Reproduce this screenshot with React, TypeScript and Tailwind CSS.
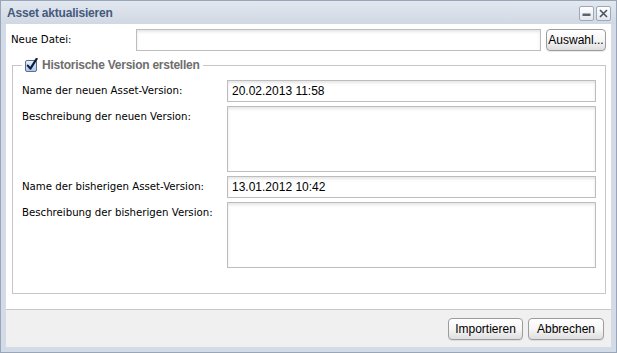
const labelFont = { fontFamily: '"DejaVu Sans", Verdana, sans-serif' };
const boldFont = { fontFamily: '"Liberation Sans", Arial, sans-serif' };

function ToolButton({ kind }: { kind: "min" | "close" }) {
  return (
    <div className="flex h-[15px] w-[15px] items-center justify-center rounded-[2px] border border-[#9ea8b8] bg-gradient-to-b from-white to-[#e3e7ee]">
      <svg width="11" height="11" viewBox="0 0 11 11">
        {kind === "min" ? (
          <rect x="1.5" y="5.5" width="8" height="2.5" fill="#5b6270" />
        ) : (
          <path d="M2 2 L9 9 M9 2 L2 9" stroke="#4b5260" strokeWidth="1.6" />
        )}
      </svg>
    </div>
  );
}

function CheckBox() {
  return (
    <svg width="14" height="14" viewBox="0 0 14 14" className="shrink-0">
      <defs>
        <linearGradient id="cb" x1="0" y1="0" x2="0" y2="1">
          <stop offset="0" stopColor="#eaf2fd" />
          <stop offset="1" stopColor="#a9c6ee" />
        </linearGradient>
      </defs>
      <rect x="0.5" y="2.5" width="11" height="11" rx="1.5" fill="url(#cb)" stroke="#5d6f8c" />
      <path d="M2.8 7.6 L5.4 10.6 L11.6 0.8" fill="none" stroke="#0f1f3d" strokeWidth="2.2" strokeLinecap="round" strokeLinejoin="round" />
    </svg>
  );
}

function TextInput({ value }: { value?: string }) {
  return (
    <div
      className="flex h-[22px] flex-1 items-center border border-[#bdbdbd] bg-white pl-[4px] text-[12px] text-black shadow-[inset_0_2px_3px_rgba(0,0,0,0.10)]"
      style={boldFont}
    >
      {value}
    </div>
  );
}

function TextArea() {
  return <div className="h-[66px] flex-1 border border-[#bdbdbd] bg-white shadow-[inset_0_2px_3px_rgba(0,0,0,0.10)]" />;
}

function Button({ children, className }: { children: React.ReactNode; className?: string }) {
  return (
    <button
      className={`flex h-[22px] items-center justify-center rounded-[4px] border border-[#9c9c9c] bg-gradient-to-b from-white via-[#f6f6f6] to-[#dedede] text-[12px] text-black shadow-[0_1px_0_rgba(0,0,0,0.08)] ${className ?? ""}`}
      style={boldFont}
    >
      {children}
    </button>
  );
}

function FieldRow({ label, children }: { label: string; children: React.ReactNode }) {
  return (
    <div className="flex items-start">
      <div className="w-[205px] shrink-0 text-[10.2px] leading-[22px] text-black" style={labelFont}>
        {label}
      </div>
      {children}
    </div>
  );
}

export default function App() {
  return (
    <div className="flex h-[353px] w-[617px] flex-col border border-[#9aa5b8] bg-[#d3dbe6] px-[5px] pb-[5px]">
      <div className="-mx-[5px] flex h-[23px] shrink-0 items-center justify-between bg-gradient-to-b from-[#e2e8f0] to-[#d0d8e3] pl-[6px] pr-[5px]">
        <span className="text-[12px] font-bold tracking-[-0.2px] text-[#455a7c]" style={boldFont}>
          Asset aktualisieren
        </span>
        <div className="flex gap-[2px] pt-[1px]">
          <ToolButton kind="min" />
          <ToolButton kind="close" />
        </div>
      </div>

      <div className="flex flex-1 flex-col bg-white">
        <div className="flex items-center gap-[5px] pl-[5px] pr-[5px] pt-[5px]">
          <div className="w-[120px] shrink-0 text-[10.2px] text-black" style={labelFont}>
            Neue Datei:
          </div>
          <TextInput />
          <Button className="w-[60px]">Auswahl...</Button>
        </div>

        <fieldset className="ml-[6px] mr-[5px] mt-[5px] border border-[#c6c6c6] px-[9px] pb-[25px] pt-[6px]">
          <legend className="flex items-center gap-[3px] px-[3px]">
            <CheckBox />
            <span className="text-[12px] font-bold tracking-[-0.25px] text-[#6e6e6e]" style={boldFont}>
              Historische Version erstellen
            </span>
          </legend>
          <div className="flex flex-col gap-[4px]">
            <FieldRow label="Name der neuen Asset-Version:">
              <TextInput value="20.02.2013 11:58" />
            </FieldRow>
            <FieldRow label="Beschreibung der neuen Version:">
              <TextArea />
            </FieldRow>
            <FieldRow label="Name der bisherigen Asset-Version:">
              <TextInput value="13.01.2012 10:42" />
            </FieldRow>
            <FieldRow label="Beschreibung der bisherigen Version:">
              <TextArea />
            </FieldRow>
          </div>
        </fieldset>

        <div className="mt-auto flex h-[38px] items-center justify-end gap-[5px] border-t border-[#c8c8c8] bg-[#f0f0f0] pr-[7px]">
          <Button className="w-[75px]">Importieren</Button>
          <Button className="w-[76px]">Abbrechen</Button>
        </div>
      </div>
    </div>
  );
}
